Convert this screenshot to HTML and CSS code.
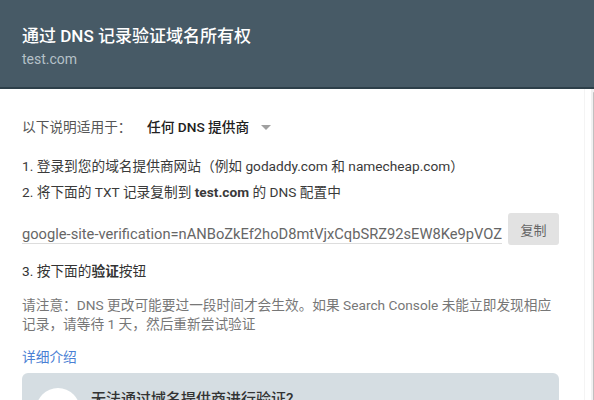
FILE: index.html
```html
<!DOCTYPE html>
<html lang="zh-CN">
<head>
    <meta charset="UTF-8">
    <meta name="viewport" content="width=device-width, initial-scale=1.0">
    <title>通过 DNS 记录验证域名所有权</title>
    <link rel="stylesheet" href="styles.css">
</head>
<body>
    <div class="header">
        <div class="title">通过 DNS 记录验证域名所有权</div>
        <div class="domain">test.com</div>
    </div>

    <div class="body">
        <div class="content">
            <div class="provider-row">
                <span class="provider-label">以下说明适用于：</span>
                <span class="provider-select">任何 DNS 提供商<span class="caret"></span></span>
            </div>

            <div class="steps">
                <p>1. 登录到您的域名提供商网站（例如 godaddy.com 和 namecheap.com）</p>
                <p>2. 将下面的 TXT 记录复制到 <b>test.com</b> 的 DNS 配置中</p>
            </div>

            <div class="copy-row">
                <div class="record">google-site-verification=nANBoZkEf2hoD8mtVjxCqbSRZ92sEW8Ke9pVOZ</div>
                <button class="copy-btn">复制</button>
            </div>

            <p class="step">3. 按下面的<b>验证</b>按钮</p>

            <p class="note">请注意：DNS 更改可能要过一段时间才会生效。如果 Search Console 未能立即发现相应记录，请等待 1 天，然后重新尝试验证</p>

            <a class="more" href="#">详细介绍</a>

            <div class="help-box">
                <div class="avatar"></div>
                <div class="help-text">无法通过域名提供商进行验证?</div>
            </div>
        </div>
        <div class="scrollbar"><div class="thumb"></div></div>
    </div>
</body>
</html>
```

FILE: styles.css
```css
html, body {
    margin: 0;
    padding: 0;
    overflow: hidden;
}
body {
    font-family: Roboto, "Noto Sans CJK SC", sans-serif;
    background: #ffffff;
    color: #333333;
}
.header {
    background-color: #475a66;
    padding: 24px 22px 0 22px;
    height: 63px;
    border-bottom: 2px solid #2d3f49;
}
.title {
    color: #ffffff;
    font-size: 17px;
    font-weight: 500;
    line-height: 24px;
}
.domain {
    color: #b5c1c8;
    font-size: 14px;
    line-height: 22px;
}
.body {
    display: flex;
    height: 311px;
    overflow: hidden;
}
.content {
    flex: 1;
    padding: 28px 25px 0 22px;
    font-size: 13.7px;
    border-right: 1px solid #f4f4f4;
    margin-right: 6px;
}
.scrollbar {
    width: 10px;
    background: #f1f1f1;
    display: flex;
    flex-direction: column;
}
.thumb {
    flex: 1;
    margin: 3px 0 0 2px;
    background: #c0c0c0;
    border-radius: 4px 4px 0 0;
}
.provider-row {
    display: flex;
    align-items: center;
    height: 20px;
    line-height: 20px;
}
.provider-label {
    color: #555555;
    width: 125px;
}
.provider-select {
    color: #212121;
    font-weight: 500;
    display: flex;
    align-items: center;
}
.caret {
    display: inline-block;
    margin-left: 12px;
    width: 0;
    height: 0;
    border-left: 5px solid transparent;
    border-right: 5px solid transparent;
    border-top: 5px solid #a0a0a0;
}
.steps {
    margin-top: 16px;
}
.steps p {
    margin: 0;
    line-height: 26px;
    color: #3a3a3a;
}
.copy-row {
    display: flex;
    align-items: flex-end;
    margin-top: 8px;
    height: 32px;
}
.record {
    width: 480px;
    font-size: 14.7px;
    line-height: 18px;
    color: #666666;
    white-space: nowrap;
    overflow: hidden;
    border-bottom: 1px solid #dddddd;
    margin-bottom: 1px;
}
.copy-btn {
    margin-left: 6px;
    width: 51px;
    height: 32px;
    background: #e2e2e2;
    border: none;
    border-radius: 3px;
    color: #666666;
    font-family: inherit;
    font-size: 13px;
    padding: 0;
    align-self: flex-start;
}
.step {
    margin: 16px 0 0 0;
    line-height: 20px;
    color: #333333;
}
.note {
    margin: 15px 0 0 0;
    line-height: 19px;
    color: #777777;
}
.more {
    display: block;
    margin-top: 13px;
    line-height: 20px;
    color: #4a7fd4;
    text-decoration: none;
}
.help-box {
    margin-top: 6px;
    background: #d5dde2;
    border-radius: 6px;
    padding: 15px 14px 20px 14px;
    display: flex;
    align-items: flex-start;
}
.avatar {
    width: 44px;
    height: 44px;
    border-radius: 50%;
    background: #ffffff;
    flex-shrink: 0;
}
.help-text {
    margin-left: 11px;
    font-size: 15px;
    line-height: 22px;
    color: #333333;
    font-weight: 500;
}
```
